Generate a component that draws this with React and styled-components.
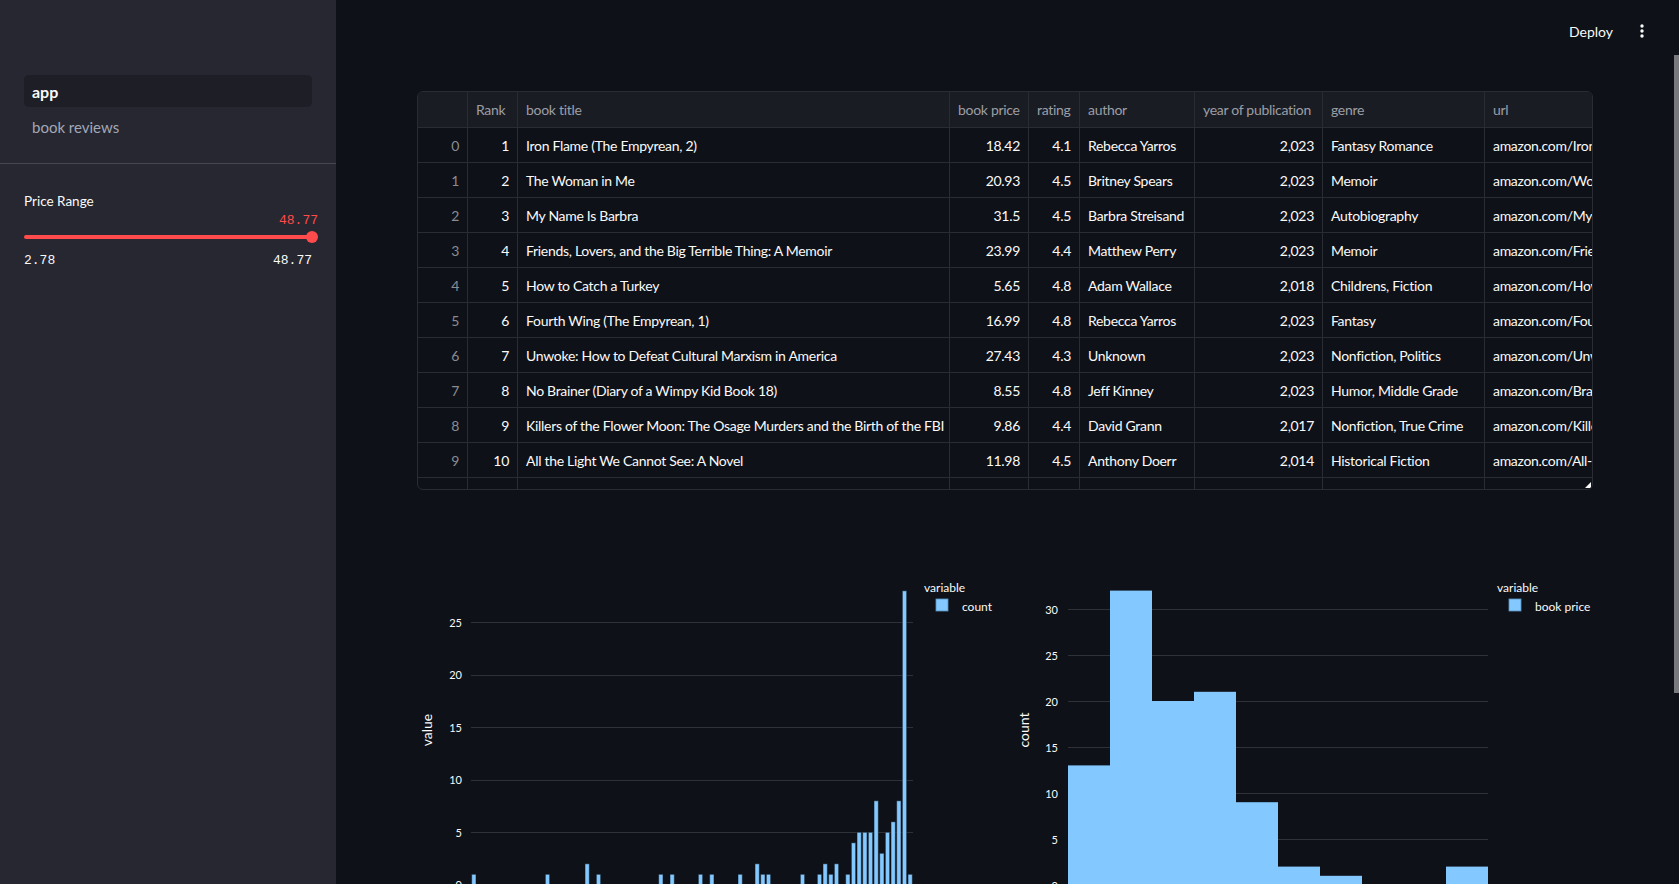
import React from "react";
import styled, { createGlobalStyle } from "styled-components";

const GlobalStyle = createGlobalStyle`
  html, body {
    margin: 0;
    padding: 0;
    background: #0e1117;
  }
  body {
    font-family: Lato, "Noto Sans", sans-serif;
    color: #fafafa;
    overflow: hidden;
  }
  * {
    box-sizing: border-box;
  }
`;

const Shell = styled.div`
  display: flex;
  width: 100vw;
  height: 100vh;
  overflow: hidden;
`;

// ---------- sidebar ----------
const Sidebar = styled.aside`
  width: 336px;
  flex-shrink: 0;
  background: #262730;
  display: flex;
  flex-direction: column;
`;

const Nav = styled.nav`
  display: flex;
  flex-direction: column;
  gap: 4px;
  padding: 75px 24px 20px;
`;

const NavItem = styled.div`
  height: 32px;
  display: flex;
  align-items: center;
  padding: 0 8px;
  border-radius: 5px;
  font-size: ${(p) => (p.$active ? "16px" : "15px")};
  color: ${(p) => (p.$active ? "#fafafa" : "#a3a8b8")};
  font-weight: ${(p) => (p.$active ? 700 : 400)};
  background: ${(p) => (p.$active ? "#1d1e26" : "transparent")};
`;

const Divider = styled.hr`
  margin: 0;
  border: none;
  height: 1px;
  background: #45464e;
`;

const Widget = styled.section`
  padding: 27px 24px 0;
`;

const WidgetLabel = styled.div`
  font-size: 13.5px;
  line-height: 20px;
  color: #fafafa;
`;

const Mono = styled.span`
  font-family: "Liberation Mono", "DejaVu Sans Mono", monospace;
  font-size: 13px;
  line-height: 16px;
`;

const ValueRow = styled.div`
  display: flex;
  justify-content: flex-end;
  margin: 2px -6px 0 0;
  color: #ff4b4b;
`;

const Track = styled.div`
  position: relative;
  height: 12px;
  margin-top: 2px;
  display: flex;
  align-items: center;
`;

const TrackFill = styled.div`
  width: 100%;
  height: 4px;
  border-radius: 2px;
  background: #ff4b4b;
`;

const Thumb = styled.div`
  position: absolute;
  right: -6px;
  top: 0;
  width: 12px;
  height: 12px;
  border-radius: 50%;
  background: #ff4b4b;
`;

const TickRow = styled.div`
  display: flex;
  justify-content: space-between;
  margin-top: 10px;
  color: #fafafa;
`;

// ---------- main ----------
const Main = styled.main`
  flex: 1;
  min-width: 0;
  position: relative;
  display: flex;
  flex-direction: column;
  overflow: hidden;
`;

const Header = styled.header`
  height: 62px;
  flex-shrink: 0;
  display: flex;
  align-items: center;
  justify-content: flex-end;
  gap: 27px;
  padding-right: 35px;
`;

const DeployButton = styled.button`
  background: none;
  border: none;
  padding: 0;
  color: #fafafa;
  font-family: inherit;
  font-size: 14px;
`;

const MenuButton = styled.div`
  display: flex;
  align-items: center;
`;

const ScrollThumb = styled.div`
  position: absolute;
  right: 0;
  top: 55px;
  width: 5px;
  height: 638px;
  background: #78797d;
`;

const Content = styled.div`
  padding: 29px 86px 0 81px;
  display: flex;
  flex-direction: column;
`;

const TableFrame = styled.div`
  position: relative;
  height: 399px;
  border: 1px solid #2a2c34;
  border-radius: 6px;
  overflow: hidden;
`;

const Grid = styled.div`
  display: grid;
  grid-template-columns: 50px 50px 432px 79px 51px 115px 128px 162px 200px;
  grid-template-rows: 36px;
  grid-auto-rows: 35px;
`;

const Cell = styled.div`
  display: flex;
  align-items: center;
  justify-content: ${(p) => (p.$right ? "flex-end" : "flex-start")};
  padding: 0 8px;
  border-right: 1px solid #2a2c34;
  border-bottom: 1px solid #2a2c34;
  white-space: nowrap;
  overflow: hidden;
  font-size: 14px;
  letter-spacing: -0.3px;
  color: ${(p) => (p.$muted ? "#8a8c93" : "#fafafa")};
`;

const HeadCell = styled(Cell)`
  background: #1a1c24;
  color: #9c9ea5;
`;

const ResizeHandle = styled.svg`
  position: absolute;
  right: 1px;
  bottom: 1px;
`;

const ChartRow = styled.div`
  display: grid;
  grid-template-columns: 1fr 1fr;
  gap: 16px;
  margin-top: 16px;
`;

const ChartSvg = styled.svg`
  display: block;
  overflow: visible;
  font-family: Lato, "Noto Sans", sans-serif;
`;

const TickText = styled.text`
  font-size: 11px;
  fill: #fafafa;
  text-anchor: end;
  dominant-baseline: central;
`;

const AxisTitle = styled.text`
  font-size: 14px;
  fill: #fafafa;
  text-anchor: middle;
  dominant-baseline: central;
`;

const LegendText = styled.text`
  font-size: 12px;
  fill: #fafafa;
  dominant-baseline: central;
`;

const columns = ["", "Rank", "book title", "book price", "rating", "author", "year of publication", "genre", "url"];
const rightCols = [0, 1, 3, 4, 6];

const rows = [
  [0, 1, "Iron Flame (The Empyrean, 2)", "18.42", "4.1", "Rebecca Yarros", "2,023", "Fantasy Romance", "amazon.com/Iron-Flame-Empyrean-Rebecca-Yarros"],
  [1, 2, "The Woman in Me", "20.93", "4.5", "Britney Spears", "2,023", "Memoir", "amazon.com/Woman-Me-Britney-Spears"],
  [2, 3, "My Name Is Barbra", "31.5", "4.5", "Barbra Streisand", "2,023", "Autobiography", "amazon.com/My-Name-Barbra-Streisand"],
  [3, 4, "Friends, Lovers, and the Big Terrible Thing: A Memoir", "23.99", "4.4", "Matthew Perry", "2,023", "Memoir", "amazon.com/Friends-Lovers-Big-Terrible-Thing"],
  [4, 5, "How to Catch a Turkey", "5.65", "4.8", "Adam Wallace", "2,018", "Childrens, Fiction", "amazon.com/How-Catch-Turkey-Adam-Wallace"],
  [5, 6, "Fourth Wing (The Empyrean, 1)", "16.99", "4.8", "Rebecca Yarros", "2,023", "Fantasy", "amazon.com/Fourth-Wing-Empyrean-Rebecca-Yarros"],
  [6, 7, "Unwoke: How to Defeat Cultural Marxism in America", "27.43", "4.3", "Unknown", "2,023", "Nonfiction, Politics", "amazon.com/Unwoke-Defeat-Cultural-Marxism-America"],
  [7, 8, "No Brainer (Diary of a Wimpy Kid Book 18)", "8.55", "4.8", "Jeff Kinney", "2,023", "Humor, Middle Grade", "amazon.com/Brainer-Diary-Wimpy-Kid-Book"],
  [8, 9, "Killers of the Flower Moon: The Osage Murders and the Birth of the FBI", "9.86", "4.4", "David Grann", "2,017", "Nonfiction, True Crime", "amazon.com/Killers-Flower-Moon-Osage-Murders"],
  [9, 10, "All the Light We Cannot See: A Novel", "11.98", "4.5", "Anthony Doerr", "2,014", "Historical Fiction", "amazon.com/All-Light-We-Cannot-See"],
  [10, 11, "The Heaven & Earth Grocery Store: A Novel", "20.3", "4.5", "James McBride", "2,023", "Historical Fiction, Literary", "amazon.com/Heaven-Earth-Grocery-Store-Novel"],
];

// counts per rating slot (78 slots across the left plot)
const ratingCounts = {
  0: 1, 13: 1, 20: 2, 22: 1, 33: 1, 35: 1, 40: 1, 42: 1, 47: 1, 50: 2, 51: 1, 52: 1,
  58: 1, 61: 1, 62: 2, 63: 1, 64: 2, 66: 1, 67: 4, 68: 5, 69: 5, 70: 5, 71: 8,
  72: 3, 73: 5, 74: 6, 75: 8, 76: 28, 77: 1,
};
const priceBins = [13, 32, 20, 21, 9, 2, 1, 0, 0, 2];

const Chart = ({ x0, x1, zero, unit, ticks, bars, title, titleX, legend, legendX }) => {
  const gy = (v) => Math.round(zero - v * unit) + 0.5;
  return (
    <ChartSvg width="580" height="400">
      {ticks.map((t) => (
        <g key={t}>
          <line x1={x0} x2={x1} y1={gy(t)} y2={gy(t)} stroke="#2f3139" strokeWidth="1" />
          <TickText x={45} y={zero - t * unit}>{t}</TickText>
        </g>
      ))}
      {bars}
      <AxisTitle x={titleX} y={224} transform={`rotate(-90 ${titleX} 224)`}>
        {title}
      </AxisTitle>
      <LegendText x={legendX} y={81}>variable</LegendText>
      <rect x={legendX + 12} y={93} width="12" height="12" fill="#83c9ff" stroke="#5a94c2" strokeWidth="0.8" />
      <LegendText x={legendX + 38} y={100}>{legend}</LegendText>
    </ChartSvg>
  );
};

const RatingChart = () => {
  const x0 = 54;
  const x1 = 496;
  const zero = 378.8;
  const unit = 10.5;
  const sw = (x1 - x0) / 78;
  const bars = Object.entries(ratingCounts).map(([i, v]) => (
    <rect
      key={i}
      x={x0 + i * sw + sw * 0.12}
      y={zero - v * unit}
      width={sw * 0.76}
      height={v * unit}
      fill="#83c9ff"
      stroke="#0e1117"
      strokeOpacity="0.5"
      strokeWidth="1"
    />
  ));
  return (
    <Chart x0={x0} x1={x1} zero={zero} unit={unit} ticks={[0, 5, 10, 15, 20, 25]}
      bars={bars} title="value" titleX={9} legend="count" legendX={507} />
  );
};

const PriceChart = () => {
  const x0 = 55;
  const zero = 379;
  const unit = 9.2;
  const bars = priceBins.map((v, i) =>
    v ? <rect key={i} x={x0 + i * 42} y={zero - v * unit} width="42" height={v * unit} fill="#83c9ff" /> : null
  );
  return (
    <Chart x0={x0} x1={x0 + 420} zero={zero} unit={unit} ticks={[0, 5, 10, 15, 20, 25, 30]}
      bars={bars} title="count" titleX={10} legend="book price" legendX={484} />
  );
};

const App = () => {
  return (
    <>
      <GlobalStyle />
      <Shell>
        <Sidebar>
          <Nav>
            <NavItem $active>app</NavItem>
            <NavItem>book reviews</NavItem>
          </Nav>
          <Divider />
          <Widget>
            <WidgetLabel>Price Range</WidgetLabel>
            <ValueRow>
              <Mono>48.77</Mono>
            </ValueRow>
            <Track>
              <TrackFill />
              <Thumb />
            </Track>
            <TickRow>
              <Mono>2.78</Mono>
              <Mono>48.77</Mono>
            </TickRow>
          </Widget>
        </Sidebar>

        <Main>
          <Header>
            <DeployButton>Deploy</DeployButton>
            <MenuButton>
              <svg width="4" height="14" viewBox="0 0 4 14">
                <circle cx="2" cy="2" r="1.7" fill="#fafafa" />
                <circle cx="2" cy="7" r="1.7" fill="#fafafa" />
                <circle cx="2" cy="12" r="1.7" fill="#fafafa" />
              </svg>
            </MenuButton>
          </Header>

          <Content>
            <TableFrame>
              <Grid>
                {columns.map((c, i) => (
                  <HeadCell key={i}>{c}</HeadCell>
                ))}
                {rows.map((r) =>
                  r.map((v, i) => (
                    <Cell key={`${r[0]}-${i}`} $right={rightCols.includes(i)} $muted={i === 0}>
                      {v}
                    </Cell>
                  ))
                )}
              </Grid>
              <ResizeHandle width="6" height="6" viewBox="0 0 6 6">
                <path d="M6 0 L6 6 L0 6 Z" fill="#fafafa" />
              </ResizeHandle>
            </TableFrame>

            <ChartRow>
              <RatingChart />
              <PriceChart />
            </ChartRow>
          </Content>

          <ScrollThumb />
        </Main>
      </Shell>
    </>
  );
};

export default App;
